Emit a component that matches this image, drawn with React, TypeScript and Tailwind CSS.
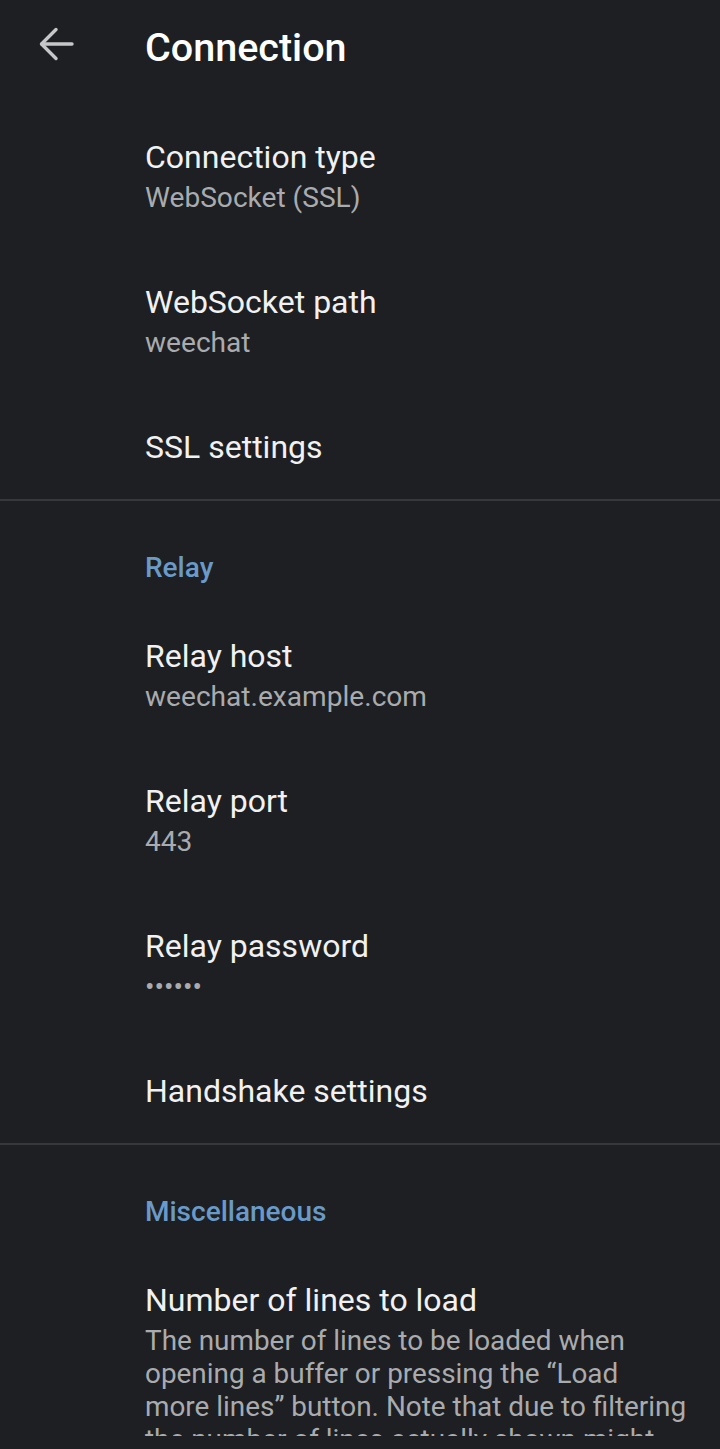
import React from "react";

type Item = { title: string; summary?: string; password?: boolean };

const connection: Item[] = [
  { title: "Connection type", summary: "WebSocket (SSL)" },
  { title: "WebSocket path", summary: "weechat" },
  { title: "SSL settings" },
];

const relay: Item[] = [
  { title: "Relay host", summary: "weechat.example.com" },
  { title: "Relay port", summary: "443" },
  { title: "Relay password", summary: "••••••", password: true },
  { title: "Handshake settings" },
];

// description is cut by the bottom of the screen, lines as the device wraps them
const linesHelp = [
  "The number of lines to be loaded when",
  "opening a buffer or pressing the “Load",
  "more lines” button. Note that due to filtering",
  "the number of lines actually shown might",
];

const BackArrow = () => (
  <svg width="48" height="48" viewBox="0 0 48 48" fill="none" stroke="#c6c7c8" strokeWidth="3.4" strokeLinecap="round" strokeLinejoin="round">
    <path d="M40 22H10" />
    <path d="M24 7.5L9.5 22L24 36.5" />
  </svg>
);

const Row = ({ item }: { item: Item }) => (
  <div className={item.summary ? "pl-[145px] pr-[32px] py-[34px]" : "pl-[145px] pr-[32px] pt-[34px] pb-[32px]"}>
    <div className="h-[40px] text-[32px] leading-[40px] text-[#f1f1f2]">{item.title}</div>
    {item.summary && (
      <div className="mt-[4px] h-[33px] overflow-hidden text-[28.1px] leading-[33px] text-[#a9abae]">{item.summary}</div>
    )}
  </div>
);

const Category = ({ label }: { label: string }) => (
  <div className="pl-[145px] pt-[50px] pb-[17px]">
    <div className="text-[28px] leading-[34px] font-medium text-[#6a9ac7]">{label}</div>
  </div>
);

const Divider = () => <div className="h-[2px] bg-[#36383b]" />;

export default function App() {
  return (
    <div className="min-h-[1449px] w-[720px] bg-[#1d1f22] font-['Roboto',sans-serif]">
      <div className="h-[1436px] overflow-hidden">
        <div className="flex h-[96px] items-center">
          <div className="ml-[32px] mr-[65px] -mt-[4px] flex">
            <BackArrow />
          </div>
          <h1 className="text-[39.5px] font-medium leading-[48px] text-white">Connection</h1>
        </div>

        <div className="pt-[7px]">
          {connection.map((it) => (
            <Row key={it.title} item={it} />
          ))}
        </div>
        <Divider />

        <Category label="Relay" />
        {relay.map((it) => (
          <Row key={it.title} item={it} />
        ))}
        <Divider />

        <Category label="Miscellaneous" />
        <div className="pl-[145px] pr-[32px] py-[34px]">
          <div className="h-[40px] text-[32px] leading-[40px] text-[#f1f1f2]">Number of lines to load</div>
          <p className="mt-[4px] text-[27.9px] leading-[33px] text-[#a9abae]">
            {linesHelp.map((l) => (
              <span key={l} className="block whitespace-nowrap">
                {l}
              </span>
            ))}
          </p>
        </div>
      </div>
    </div>
  );
}
